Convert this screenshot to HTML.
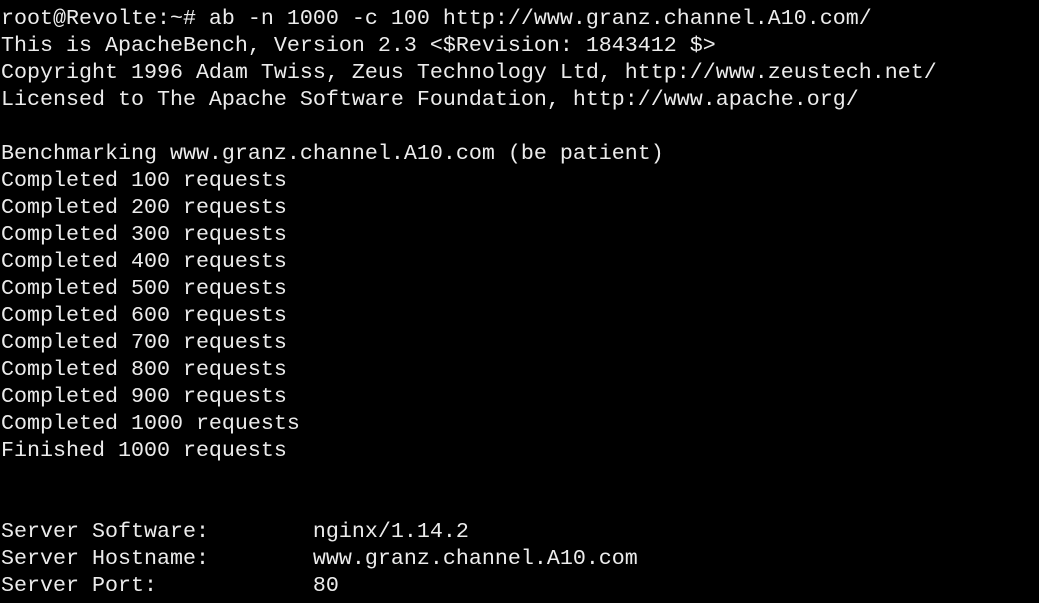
<!DOCTYPE html>
<html><head><style>
html,body{margin:0;padding:0;background:#000;width:1039px;height:603px;overflow:hidden}
pre{margin:0;padding:5px 0 0 1px;font-family:"Liberation Mono",monospace;font-size:21.67px;line-height:27px;color:#ececec;white-space:pre}
</style></head><body><pre>root@Revolte:~# ab -n 1000 -c 100 http://www.granz.channel.A10.com/
This is ApacheBench, Version 2.3 &lt;$Revision: 1843412 $&gt;
Copyright 1996 Adam Twiss, Zeus Technology Ltd, http://www.zeustech.net/
Licensed to The Apache Software Foundation, http://www.apache.org/

Benchmarking www.granz.channel.A10.com (be patient)
Completed 100 requests
Completed 200 requests
Completed 300 requests
Completed 400 requests
Completed 500 requests
Completed 600 requests
Completed 700 requests
Completed 800 requests
Completed 900 requests
Completed 1000 requests
Finished 1000 requests


Server Software:        nginx/1.14.2
Server Hostname:        www.granz.channel.A10.com
Server Port:            80
</pre></body></html>
